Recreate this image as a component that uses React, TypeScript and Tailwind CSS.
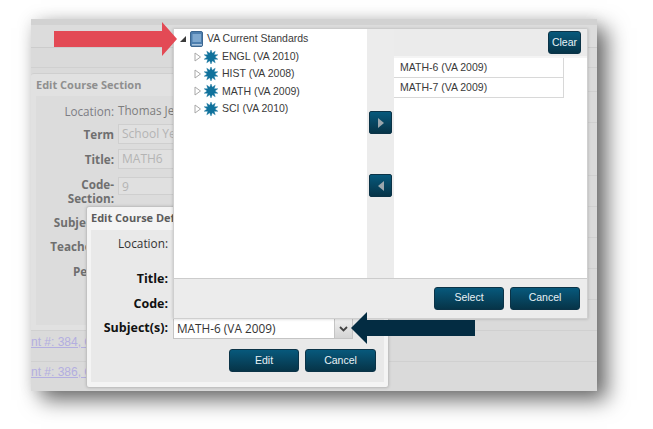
const sans = 'font-["Liberation_Sans",Arial,sans-serif]';

const burstPoints = (() => {
  const pts: string[] = [];
  for (let i = 0; i < 20; i++) {
    const r = i % 2 === 0 ? 7.2 : 3.9;
    const a = (i * Math.PI) / 10;
    pts.push(`${(7 + r * Math.sin(a)).toFixed(2)},${(7 - r * Math.cos(a)).toFixed(2)}`);
  }
  return pts.join(' ');
})();

const Burst = () => (
  <svg width="14" height="14" viewBox="0 0 14 14" className="shrink-0">
    <polygon points={burstPoints} fill="#10729c" stroke="#10729c" strokeWidth="0.4" />
  </svg>
);

const BookIcon = () => (
  <svg width="13" height="16" viewBox="0 0 13 16" className="shrink-0">
    <rect x="0.5" y="0.5" width="12" height="15" rx="1.5" fill="#4d7faf" stroke="#3c668f" />
    <rect x="2.5" y="3" width="8.5" height="8" fill="#7ea8cf" />
    <rect x="2" y="13" width="10" height="1.5" fill="#a9c4dc" />
  </svg>
);

const Btn = ({ label, className }: { label: string; className: string }) => (
  <button
    type="button"
    className={`${className} rounded-[3px] border border-[#0b3347] bg-gradient-to-b from-[#07597c] to-[#063448] text-[10.5px] text-[#e8f2f6] ${sans}`}
  >
    {label}
  </button>
);

const ArrowBtn = ({ dir }: { dir: 'left' | 'right' }) => (
  <button
    type="button"
    className="flex h-[23px] w-[23px] items-center justify-center rounded-[2px] border border-[#0b3347] bg-gradient-to-b from-[#07597c] to-[#063448]"
  >
    <svg width="6" height="10" viewBox="0 0 6 10">
      <polygon points={dir === 'right' ? '0,0 6,5 0,10' : '6,0 0,5 6,10'} fill="#9aa6ad" />
    </svg>
  </button>
);

const TreeRow = ({ label }: { label: string }) => (
  <div className="flex h-[17.4px] items-center pl-[20px]">
    <svg width="8" height="10" viewBox="0 0 8 10" className="mr-[2px] shrink-0">
      <polygon points="1,1 6.5,5 1,9" fill="none" stroke="#a8a8a8" />
    </svg>
    <Burst />
    <span className="ml-[4px] whitespace-nowrap">{label}</span>
  </div>
);

const BackRow = ({
  label,
  bold,
  className,
  children,
}: {
  label: string;
  bold?: boolean;
  className: string;
  children?: React.ReactNode;
}) => (
  <div className={`flex ${className}`}>
    <div className={`w-[78px] shrink-0 text-right leading-[14px] ${bold ? 'font-bold text-[#6f6f6f]' : 'text-[#7d7d85]'}`}>
      {label}
    </div>
    <div className="ml-[4px]">{children}</div>
  </div>
);

const GhostInput = ({ text, className }: { text: string; className: string }) => (
  <div className={`${className} w-[120px] border border-[#cfcfcf] bg-[#e0e0e0] pl-[3px] text-[12px] leading-[18px] text-[#b4b4b4]`}>
    {text}
  </div>
);

const sheetRows = ['h-[20px]', 'h-[24px]', 'h-[31px]', 'h-[53px]', 'h-[31px]', 'h-[31px]', 'h-[31px]', 'h-[31px]', 'h-[31px]'];

const App = () => {
  return (
    <div className="relative h-[429px] w-[653px] overflow-hidden bg-white">
      {/* screenshot sheet */}
      <div className="absolute top-[19px] left-[31px] flex h-[372px] w-[566px] flex-col bg-[#dadada] shadow-[10px_9px_20px_rgba(0,0,0,0.58),0_0_14px_rgba(0,0,0,0.08)]">
        <div className="h-[6px] bg-[#d2d2d2]" />
        <div className="h-[23px] border-b border-[#cccccc] bg-[#dcdcdc]" />
        {sheetRows.map((h, i) => (
          <div key={i} className={`${h} border-b border-[#d0d0d0]`} />
        ))}
        <div className={`h-[31px] border-b border-[#d0d0d0] pt-[4px] text-[12px] leading-[15px] text-[#b3aee0] underline ${sans}`}>
          nt #: 384, Grade
        </div>
        <div className={`pt-[3px] text-[12px] leading-[15px] text-[#b3aee0] underline ${sans}`}>nt #: 386, Grade</div>
      </div>

      {/* Edit Course Section, dimmed */}
      <div className="absolute top-[73px] left-[31px] flex h-[257px] w-[240px] flex-col rounded-tl-[3px] border-t border-[#cfcfcf] bg-[#e1e1e1] font-['Open_Sans',sans-serif]">
        <div className="flex h-[22px] items-center pl-[5px] text-[11px] font-bold text-[#8f8f8f]">Edit Course Section</div>
        <div className="ml-[5px] flex h-[229px] flex-col bg-[#dcdcdc] pt-[4px] text-[11.7px]">
          <BackRow label="Location:" className="h-[21px] items-center">
            <span className="whitespace-nowrap text-[#7d7d7d]">Thomas Jefferson</span>
          </BackRow>
          <BackRow label="Term" bold className="h-[25px] items-center">
            <GhostInput text="School Year" className="h-[20px]" />
          </BackRow>
          <BackRow label="Title:" bold className="h-[26px] items-center">
            <GhostInput text="MATH6" className="h-[20px]" />
          </BackRow>
          <BackRow label="Code-Section:" bold className="h-[38px] items-start pt-[5px]">
            <GhostInput text="9" className="h-[18px]" />
          </BackRow>
          <BackRow label="Subject(s):" bold className="h-[24px] items-center" />
          <BackRow label="Teacher(s):" bold className="h-[24px] items-center" />
          <BackRow label="Period:" bold className="h-[25px] items-center" />
        </div>
      </div>

      {/* Edit Course Definition */}
      <div className="absolute top-[206px] left-[86px] flex h-[182px] w-[303px] flex-col rounded-[3px] border border-[#c2c2c2] bg-[#f4f4f4] px-[4px] pb-[5px] font-['Open_Sans',sans-serif] shadow-[0_0_3px_rgba(0,0,0,0.15)]">
        <div className="flex h-[23px] shrink-0 items-center text-[11px] font-bold text-[#5c5c5c]">Edit Course Definition</div>
        <div className="flex flex-1 flex-col bg-[#e9e9e9] text-[11.8px]">
          <div className="flex h-[28px] items-center">
            <div className="w-[77px] text-right text-[#333]">Location:</div>
          </div>
          <div className="mt-[9px] flex h-[24px] items-center">
            <div className="w-[77px] text-right text-[12.5px] font-bold text-[#111]">Title:</div>
          </div>
          <div className="mt-[1px] flex h-[24px] items-center">
            <div className="w-[77px] text-right text-[12.5px] font-bold text-[#111]">Code:</div>
          </div>
          <div className="mt-[2px] flex h-[21px] items-center">
            <div className="w-[77px] text-right text-[12.5px] font-bold text-[#111]">Subject(s):</div>
            <div className="ml-[5px] flex h-full w-[180px]">
              <div className="flex flex-1 items-center border border-[#c4c4c4] bg-white pl-[3px] text-[#333]">MATH-6 (VA 2009)</div>
              <div className="flex w-[18px] items-center justify-center border border-l-0 border-[#c4c4c4] bg-gradient-to-b from-[#f0f0f0] to-[#d4d4d4]">
                <svg width="9" height="6" viewBox="0 0 9 6">
                  <polyline points="1,1 4.5,4.5 8,1" fill="none" stroke="#444" strokeWidth="1.8" />
                </svg>
              </div>
            </div>
          </div>
          <div className="mt-[10px] flex justify-end gap-[6px] pr-[8px]">
            <Btn label="Edit" className="h-[23px] w-[70px]" />
            <Btn label="Cancel" className="h-[23px] w-[71px]" />
          </div>
        </div>
      </div>

      {/* Standards picker */}
      <div className={`absolute top-[29px] left-[173px] flex h-[290px] w-[415px] flex-col border-r border-b border-l border-[#cfcfcf] bg-[#ececec] text-[10.5px] text-[#3a3a3a] shadow-[0_0_3px_rgba(0,0,0,0.2)] ${sans}`}>
        <div className="flex h-[250px] shrink-0 border-b border-[#cccccc]">
          <div className="w-[193px] bg-white pt-[1px]">
            <div className="flex h-[17px] items-center pl-[6px]">
              <svg width="6" height="6" viewBox="0 0 6 6" className="mr-[4px] shrink-0">
                <polygon points="6,0 6,6 0,6" fill="#3a3a3a" />
              </svg>
              <BookIcon />
              <span className="ml-[4px] whitespace-nowrap">VA Current Standards</span>
            </div>
            <div className="pt-[1px]">
              <TreeRow label="ENGL (VA 2010)" />
              <TreeRow label="HIST (VA 2008)" />
              <TreeRow label="MATH (VA 2009)" />
              <TreeRow label="SCI (VA 2010)" />
            </div>
          </div>
          <div className="flex w-[27px] flex-col items-center gap-[40px] pt-[82px]">
            <ArrowBtn dir="right" />
            <ArrowBtn dir="left" />
          </div>
          <div className="flex-1 bg-white">
            <div className="flex h-[29px] items-center justify-end border-b-2 border-[#f4f4f4] bg-[#ebebeb] pr-[6px]">
              <Btn label="Clear" className="h-[23px] w-[33px]" />
            </div>
            <div className="flex h-[20px] w-[170px] items-center border-b border-r border-[#d8d8d8] pl-[6px]">MATH-6 (VA 2009)</div>
            <div className="flex h-[20px] w-[170px] items-center border-b border-r border-[#d8d8d8] pl-[6px]">MATH-7 (VA 2009)</div>
          </div>
        </div>
        <div className="flex flex-1 items-center justify-end gap-[6px] pr-[7px] pb-[1px]">
          <Btn label="Select" className="h-[23px] w-[70px]" />
          <Btn label="Cancel" className="h-[23px] w-[70px]" />
        </div>
      </div>

      {/* callout arrows */}
      <svg className="absolute top-[20px] left-[52px]" width="128" height="38" viewBox="0 0 128 38">
        <polygon points="2,11 110,11 110,2 125,19 110,36 110,27 2,27" fill="#e34a55" />
      </svg>
      <svg className="absolute top-[310px] left-[349px]" width="128" height="38" viewBox="0 0 128 38">
        <polygon points="2,18 18,2 18,10 126,10 126,26 18,26 18,34" fill="#032c42" />
      </svg>
    </div>
  );
};

export default App;
